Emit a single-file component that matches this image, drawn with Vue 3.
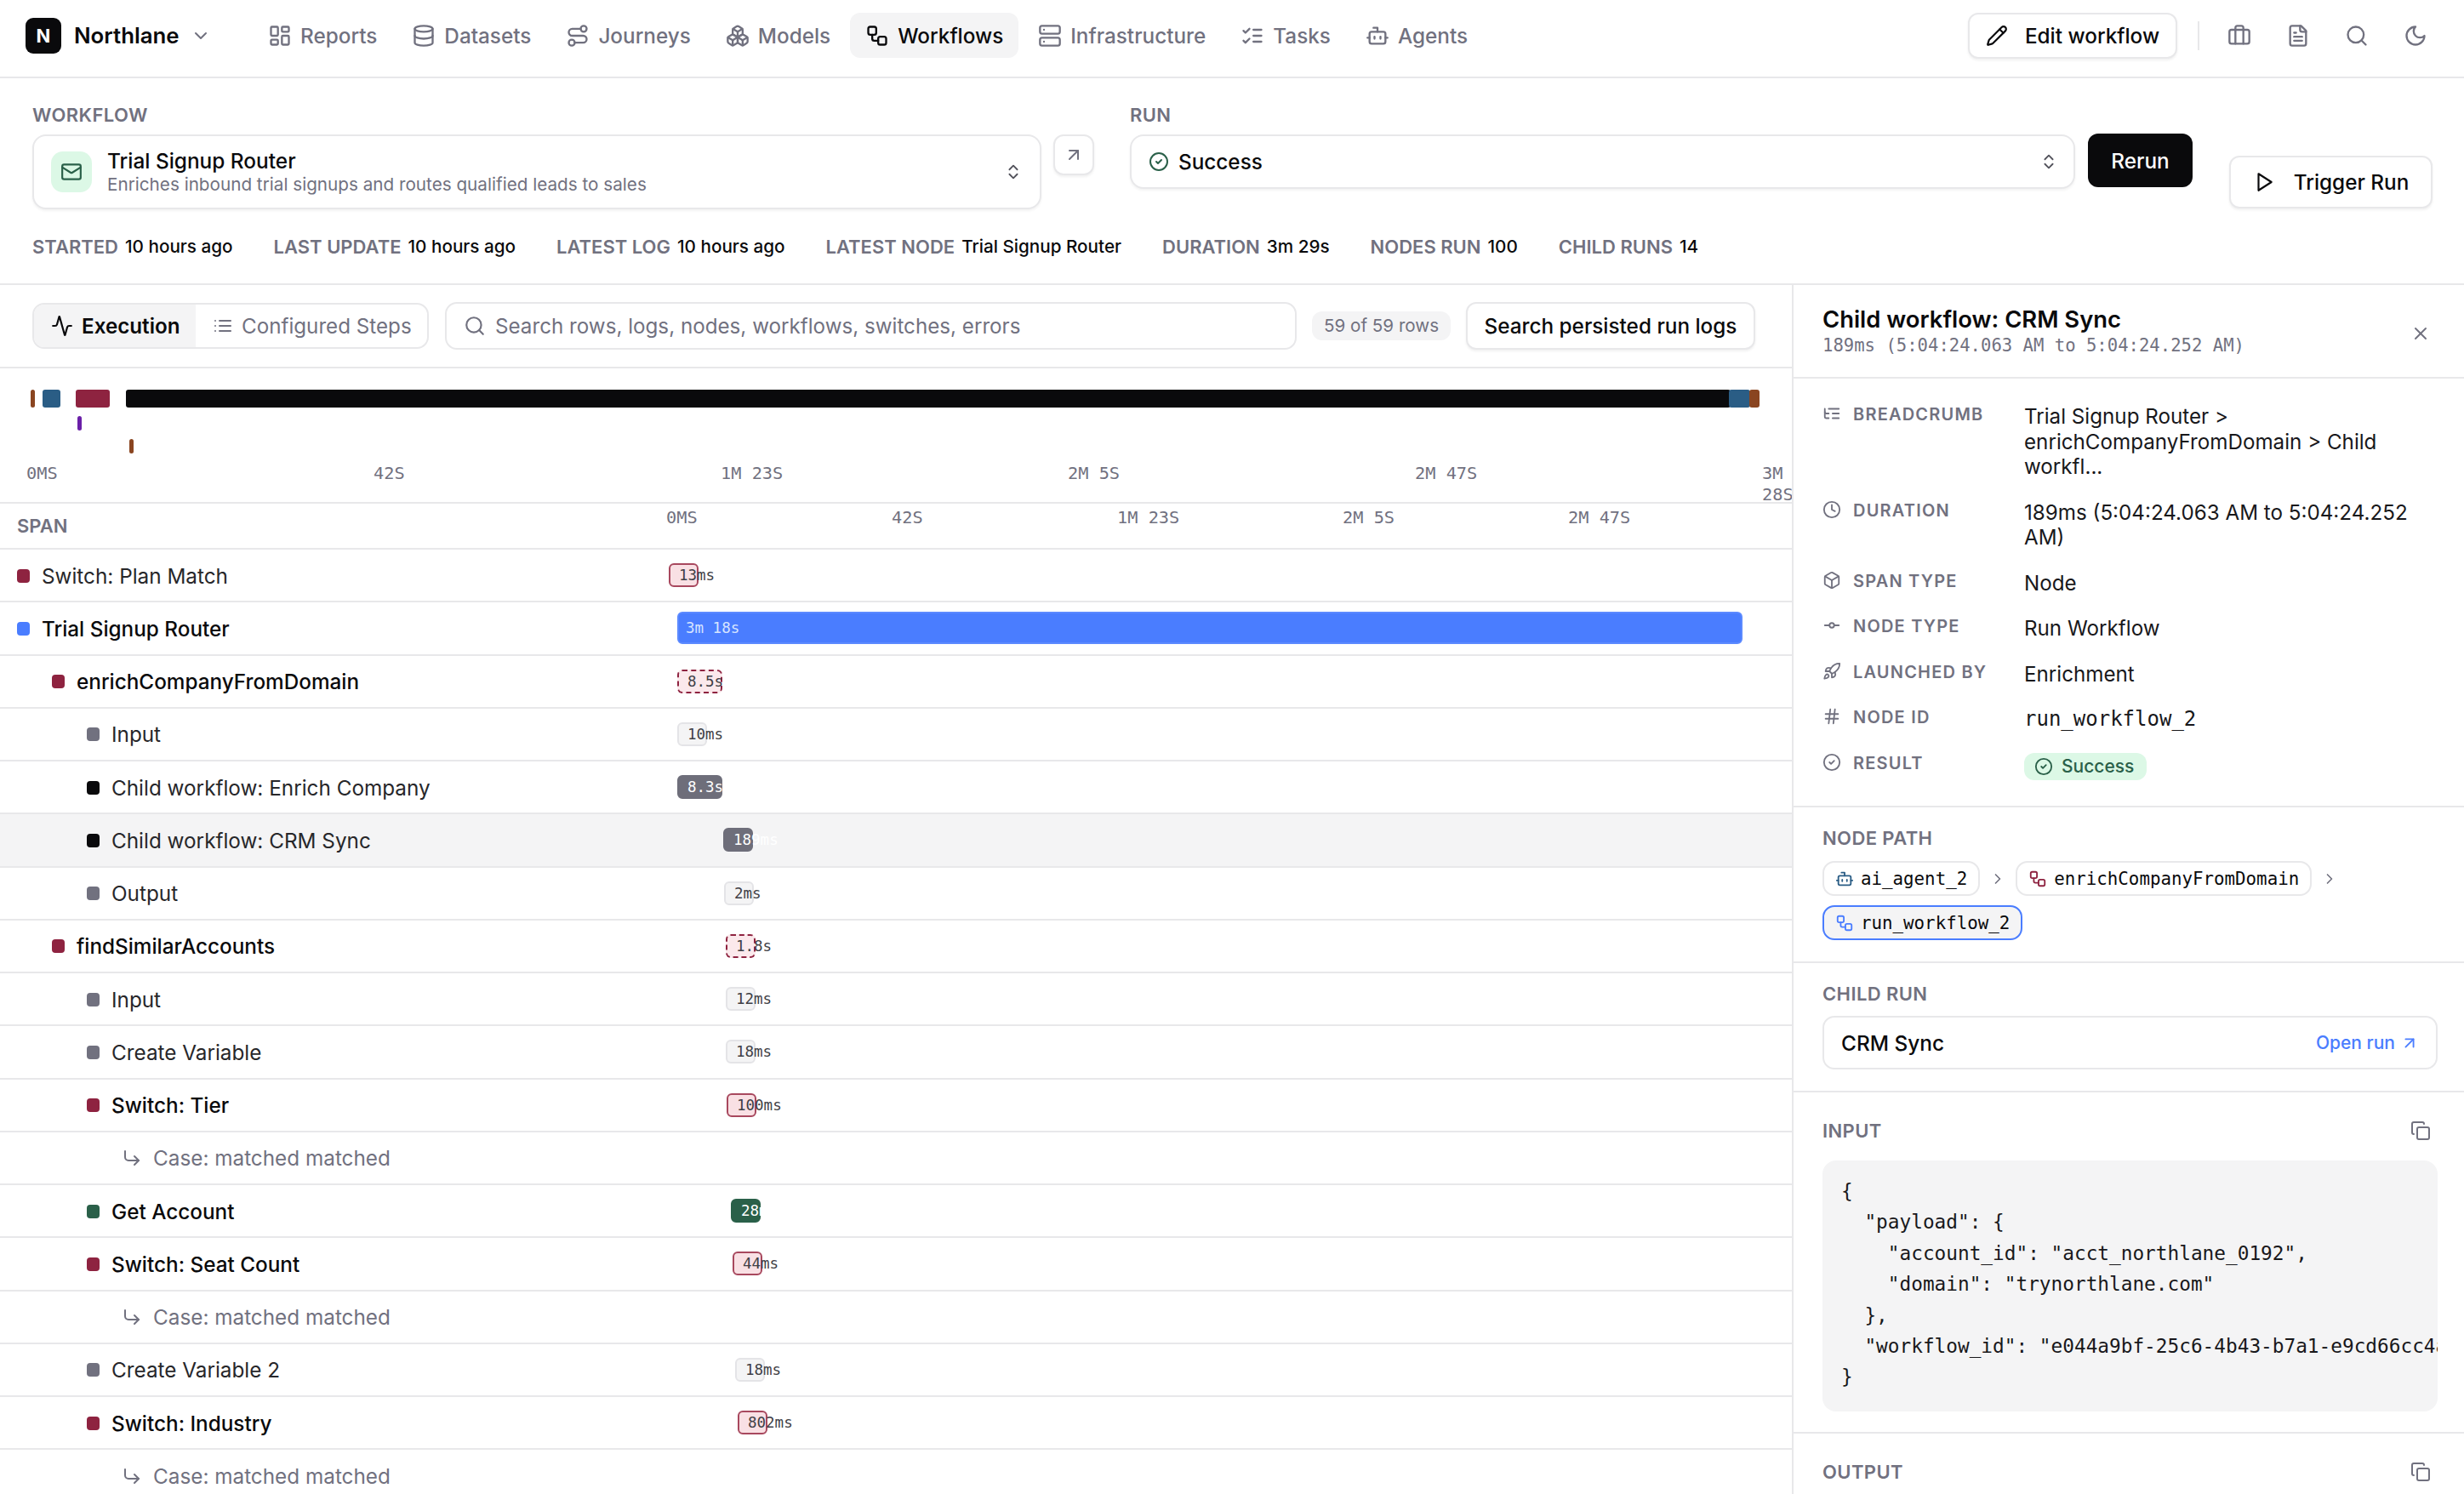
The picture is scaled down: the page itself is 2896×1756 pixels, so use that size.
<script setup>
import { h } from 'vue'

const paths = {
  reports: '<rect width="7" height="9" x="3" y="3" rx="1"/><rect width="7" height="5" x="14" y="3" rx="1"/><rect width="7" height="9" x="14" y="12" rx="1"/><rect width="7" height="5" x="3" y="16" rx="1"/>',
  database: '<ellipse cx="12" cy="5" rx="9" ry="3"/><path d="M3 5V19A9 3 0 0 0 21 19V5"/><path d="M3 12A9 3 0 0 0 21 12"/>',
  route: '<circle cx="6" cy="19" r="3"/><path d="M9 19h8.5a3.5 3.5 0 0 0 0-7h-11a3.5 3.5 0 0 1 0-7H15"/><circle cx="18" cy="5" r="3"/>',
  boxes: '<path d="M2.97 12.92A2 2 0 0 0 2 14.63v3.24a2 2 0 0 0 .97 1.71l3 1.8a2 2 0 0 0 2.06 0L12 19v-5.5l-5-3-4.03 2.42Z"/><path d="m7 16.5-4.74-2.85"/><path d="m7 16.5 5-3"/><path d="M7 16.5v5.17"/><path d="M12 13.5V19l3.97 2.38a2 2 0 0 0 2.06 0l3-1.8a2 2 0 0 0 .97-1.71v-3.24a2 2 0 0 0-.97-1.71L17 10.5l-5 3Z"/><path d="m17 16.5-5-3"/><path d="m17 16.5 4.74-2.85"/><path d="M17 16.5v5.17"/><path d="M7.97 4.42A2 2 0 0 0 7 6.13v4.37l5 3 5-3V6.13a2 2 0 0 0-.97-1.71l-3-1.8a2 2 0 0 0-2.06 0l-3 1.8Z"/><path d="M12 8 7.26 5.15"/><path d="m12 8 4.74-2.85"/><path d="M12 13.5V8"/>',
  workflow: '<rect width="8" height="8" x="3" y="3" rx="2"/><path d="M7 11v4a2 2 0 0 0 2 2h4"/><rect width="8" height="8" x="13" y="13" rx="2"/>',
  server: '<rect width="20" height="8" x="2" y="2" rx="2" ry="2"/><rect width="20" height="8" x="2" y="14" rx="2" ry="2"/><line x1="6" x2="6.01" y1="6" y2="6"/><line x1="6" x2="6.01" y1="18" y2="18"/>',
  tasks: '<path d="m3 17 2 2 4-4"/><path d="m3 7 2 2 4-4"/><path d="M13 6h8"/><path d="M13 12h8"/><path d="M13 18h8"/>',
  bot: '<path d="M12 8V4H8"/><rect width="16" height="12" x="4" y="8" rx="2"/><path d="M2 14h2"/><path d="M20 14h2"/><path d="M15 13v2"/><path d="M9 13v2"/>',
  pencil: '<path d="M21.174 6.812a1 1 0 0 0-3.986-3.987L3.842 16.174a2 2 0 0 0-.5.83l-1.321 4.352a.5.5 0 0 0 .623.622l4.353-1.32a2 2 0 0 0 .83-.497z"/><path d="m15 5 4 4"/>',
  briefcase: '<path d="M16 20V4a2 2 0 0 0-2-2h-4a2 2 0 0 0-2 2v16"/><rect width="20" height="14" x="2" y="6" rx="2"/>',
  file: '<path d="M15 2H6a2 2 0 0 0-2 2v16a2 2 0 0 0 2 2h12a2 2 0 0 0 2-2V7Z"/><path d="M14 2v4a2 2 0 0 0 2 2h4"/><path d="M10 9H8"/><path d="M16 13H8"/><path d="M16 17H8"/>',
  search: '<circle cx="11" cy="11" r="8"/><path d="m21 21-4.3-4.3"/>',
  moon: '<path d="M12 3a6 6 0 0 0 9 9 9 9 0 1 1-9-9Z"/>',
  mail: '<rect width="20" height="16" x="2" y="4" rx="2"/><path d="m22 7-8.97 5.7a1.94 1.94 0 0 1-2.06 0L2 7"/>',
  updown: '<path d="m7 15 5 5 5-5"/><path d="m7 9 5-5 5 5"/>',
  external: '<path d="M7 7h10v10"/><path d="M7 17 17 7"/>',
  check: '<circle cx="12" cy="12" r="10"/><path d="m9 12 2 2 4-4"/>',
  play: '<polygon points="6 3 20 12 6 21 6 3"/>',
  activity: '<path d="M22 12h-2.48a2 2 0 0 0-1.93 1.46l-2.35 8.36a.25.25 0 0 1-.48 0L9.24 2.18a.25.25 0 0 0-.48 0l-2.35 8.36A2 2 0 0 1 4.49 12H2"/>',
  list: '<path d="M3 12h.01"/><path d="M3 18h.01"/><path d="M3 6h.01"/><path d="M8 12h13"/><path d="M8 18h13"/><path d="M8 6h13"/>',
  corner: '<polyline points="15 10 20 15 15 20"/><path d="M4 4v7a4 4 0 0 0 4 4h12"/>',
  x: '<path d="M18 6 6 18"/><path d="m6 6 12 12"/>',
  tree: '<path d="M21 12h-8"/><path d="M21 6H8"/><path d="M21 18h-8"/><path d="M3 6v4c0 1.1.9 2 2 2h3"/><path d="M3 10v6c0 1.1.9 2 2 2h3"/>',
  clock: '<circle cx="12" cy="12" r="10"/><polyline points="12 6 12 12 16 14"/>',
  box: '<path d="M21 8a2 2 0 0 0-1-1.73l-7-4a2 2 0 0 0-2 0l-7 4A2 2 0 0 0 3 8v8a2 2 0 0 0 1 1.73l7 4a2 2 0 0 0 2 0l7-4A2 2 0 0 0 21 16Z"/><path d="m3.3 7 8.7 5 8.7-5"/><path d="M12 22V12"/>',
  commit: '<circle cx="12" cy="12" r="3"/><line x1="3" x2="9" y1="12" y2="12"/><line x1="15" x2="21" y1="12" y2="12"/>',
  rocket: '<path d="M4.5 16.5c-1.5 1.26-2 5-2 5s3.74-.5 5-2c.71-.84.7-2.13-.09-2.91a2.18 2.18 0 0 0-2.91-.09z"/><path d="m12 15-3-3a22 22 0 0 1 2-3.95A12.88 12.88 0 0 1 22 2c0 2.72-.78 7.5-6 11a22.35 22.35 0 0 1-4 2z"/><path d="M9 12H4s.55-3.03 2-4c1.62-1.08 5 0 5 0"/><path d="M12 15v5s3.03-.55 4-2c1.08-1.62 0-5 0-5"/>',
  hash: '<line x1="4" x2="20" y1="9" y2="9"/><line x1="4" x2="20" y1="15" y2="15"/><line x1="10" x2="8" y1="3" y2="21"/><line x1="16" x2="14" y1="3" y2="21"/>',
  right: '<path d="m9 18 6-6-6-6"/>',
  down: '<path d="m6 9 6 6 6-6"/>',
  copy: '<rect width="14" height="14" x="8" y="8" rx="2" ry="2"/><path d="M4 16c-1.1 0-2-.9-2-2V4c0-1.1.9-2 2-2h10c1.1 0 2 .9 2 2"/>'
}

// small local icon, lucide style strokes
const Icon = (props) => h('svg', {
  width: props.size || 24,
  height: props.size || 24,
  viewBox: '0 0 24 24',
  fill: 'none',
  stroke: 'currentColor',
  'stroke-width': 2,
  'stroke-linecap': 'round',
  'stroke-linejoin': 'round',
  class: 'icon',
  innerHTML: paths[props.name]
})
Icon.props = ['name', 'size']

const navItems = [
  { label: 'Reports', icon: 'reports' },
  { label: 'Datasets', icon: 'database' },
  { label: 'Journeys', icon: 'route' },
  { label: 'Models', icon: 'boxes' },
  { label: 'Workflows', icon: 'workflow', active: true },
  { label: 'Infrastructure', icon: 'server' },
  { label: 'Tasks', icon: 'tasks' },
  { label: 'Agents', icon: 'bot' }
]

const stats = [
  ['STARTED', '10 hours ago'],
  ['LAST UPDATE', '10 hours ago'],
  ['LATEST LOG', '10 hours ago'],
  ['LATEST NODE', 'Trial Signup Router'],
  ['DURATION', '3m 29s'],
  ['NODES RUN', '100'],
  ['CHILD RUNS', '14']
]

const lanes = [
  { height: 21, bars: [
    { left: 36, width: 5, color: '#8a4520' },
    { left: 50, width: 21, color: '#2a5d85' },
    { left: 89, width: 40, color: '#8e2340' },
    { left: 148, width: 1886, color: '#0a0a0c' },
    { left: 2032, width: 25, color: '#2a5d85' },
    { left: 2056, width: 12, color: '#8a4520' }
  ] },
  { height: 17, bars: [{ left: 91, width: 5, color: '#6a1fa8' }] },
  { height: 17, bars: [{ left: 152, width: 5, color: '#8a4520' }] }
]

const miniTicks = ['0MS', '42S', '1M 23S', '2M 5S', '2M 47S', '3M 28S']
const spanTicks = ['0MS', '42S', '1M 23S', '2M 5S', '2M 47S']

const red = '#8e2340'
const gray = '#71717f'
const black = '#0a0a0c'
const rows = [
  { name: 'Switch: Plan Match', level: 0, dot: red, at: 0, time: '13ms', kind: 'switch' },
  { name: 'Trial Signup Router', level: 0, dot: '#4a7dff', at: 10, width: 1252, time: '3m 18s', kind: 'root', strong: true },
  { name: 'enrichCompanyFromDomain', level: 1, dot: red, at: 10, width: 53, time: '8.5s', kind: 'group', strong: true },
  { name: 'Input', level: 2, dot: gray, at: 10, time: '10ms', kind: 'plain' },
  { name: 'Child workflow: Enrich Company', level: 2, dot: black, at: 10, width: 53, time: '8.3s', kind: 'child' },
  { name: 'Child workflow: CRM Sync', level: 2, dot: black, at: 64, time: '189ms', kind: 'child', selected: true },
  { name: 'Output', level: 2, dot: gray, at: 65, time: '2ms', kind: 'plain' },
  { name: 'findSimilarAccounts', level: 1, dot: red, at: 67, time: '1.8s', kind: 'group', strong: true },
  { name: 'Input', level: 2, dot: gray, at: 67, time: '12ms', kind: 'plain' },
  { name: 'Create Variable', level: 2, dot: gray, at: 67, time: '18ms', kind: 'plain' },
  { name: 'Switch: Tier', level: 2, dot: red, at: 68, time: '100ms', kind: 'switch', strong: true },
  { name: 'Case: matched matched', level: 3, isCase: true },
  { name: 'Get Account', level: 2, dot: '#2a6049', at: 73, time: '28ms', kind: 'data', strong: true },
  { name: 'Switch: Seat Count', level: 2, dot: red, at: 75, time: '44ms', kind: 'switch', strong: true },
  { name: 'Case: matched matched', level: 3, isCase: true },
  { name: 'Create Variable 2', level: 2, dot: gray, at: 78, time: '18ms', kind: 'plain' },
  { name: 'Switch: Industry', level: 2, dot: red, at: 81, time: '802ms', kind: 'switch', strong: true },
  { name: 'Case: matched matched', level: 3, isCase: true }
]

const details = [
  { label: 'BREADCRUMB', icon: 'tree', value: 'Trial Signup Router > enrichCompanyFromDomain > Child workfl...' },
  { label: 'DURATION', icon: 'clock', value: '189ms (5:04:24.063 AM to 5:04:24.252 AM)' },
  { label: 'SPAN TYPE', icon: 'box', value: 'Node' },
  { label: 'NODE TYPE', icon: 'commit', value: 'Run Workflow' },
  { label: 'LAUNCHED BY', icon: 'rocket', value: 'Enrichment' },
  { label: 'NODE ID', icon: 'hash', value: 'run_workflow_2', mono: true },
  { label: 'RESULT', icon: 'check', pill: 'Success' }
]

const inputJson = `{
  "payload": {
    "account_id": "acct_northlane_0192",
    "domain": "trynorthlane.com"
  },
  "workflow_id": "e044a9bf-25c6-4b43-b7a1-e9cd66cc4a21"
}`
</script>

<template>
  <div class="page">
    <header class="topbar">
      <div class="brand">
        <span class="logo">N</span>
        <span class="brand-name">Northlane</span>
        <Icon name="down" :size="24" class="brand-chevron" />
      </div>
      <nav class="nav">
        <a v-for="item in navItems" :key="item.label" class="nav-item" :class="{ active: item.active }">
          <Icon :name="item.icon" :size="28" />
          <span>{{ item.label }}</span>
        </a>
      </nav>
      <div class="topbar-right">
        <button class="btn edit-btn"><Icon name="pencil" :size="26" /> Edit workflow</button>
        <span class="divider"></span>
        <div class="tool-icons">
          <Icon name="briefcase" :size="28" />
          <Icon name="file" :size="28" />
          <Icon name="search" :size="28" />
          <Icon name="moon" :size="28" />
        </div>
      </div>
    </header>

    <section class="run-head">
      <div class="pickers">
        <div class="picker-col">
          <div class="field-label">WORKFLOW</div>
          <div class="workflow-line">
            <div class="select workflow-select">
              <span class="wf-icon"><Icon name="mail" :size="26" /></span>
              <div class="wf-text">
                <div class="wf-title">Trial Signup Router</div>
                <div class="wf-sub">Enriches inbound trial signups and routes qualified leads to sales</div>
              </div>
              <Icon name="updown" :size="22" class="updown" />
            </div>
            <button class="btn open-btn"><Icon name="external" :size="24" /></button>
          </div>
        </div>
        <div class="picker-col run-col">
          <div class="field-label">RUN</div>
          <div class="run-line">
            <div class="select run-select">
              <Icon name="check" :size="24" class="ok-icon" />
              <span class="run-value">Success</span>
              <Icon name="updown" :size="22" class="updown" />
            </div>
            <button class="rerun">Rerun</button>
          </div>
        </div>
        <button class="btn trigger-btn"><Icon name="play" :size="26" /> Trigger Run</button>
      </div>
      <div class="stats">
        <div v-for="stat in stats" :key="stat[0]" class="stat">
          <span class="stat-label">{{ stat[0] }}</span>
          <span class="stat-value">{{ stat[1] }}</span>
        </div>
      </div>
    </section>

    <main class="body">
      <section class="trace">
        <div class="toolbar">
          <div class="segment">
            <span class="seg active"><Icon name="activity" :size="26" /> Execution</span>
            <span class="seg"><Icon name="list" :size="24" /> Configured Steps</span>
          </div>
          <div class="search">
            <Icon name="search" :size="26" />
            <span>Search rows, logs, nodes, workflows, switches, errors</span>
          </div>
          <span class="count">59 of 59 rows</span>
          <button class="btn logs-btn">Search persisted run logs</button>
        </div>

        <div class="minimap">
          <div v-for="(lane, i) in lanes" :key="i" class="lane" :style="{ height: lane.height + 'px' }">
            <span
              v-for="bar in lane.bars"
              :key="bar.left"
              class="lane-bar"
              :style="{ left: bar.left + 'px', width: bar.width + 'px', background: bar.color }"
            ></span>
          </div>
          <div class="mini-ticks">
            <span v-for="tick in miniTicks" :key="tick" class="mini-tick">{{ tick }}</span>
          </div>
        </div>

        <div class="span-head">
          <div class="span-title">SPAN</div>
          <div class="span-ticks">
            <span v-for="tick in spanTicks" :key="tick" class="span-tick">{{ tick }}</span>
          </div>
        </div>

        <div
          v-for="(row, i) in rows"
          :key="i"
          class="row"
          :class="{ selected: row.selected }"
        >
          <div class="row-name" :class="{ strong: row.strong, 'case-name': row.isCase }" :style="{ paddingLeft: 20 + row.level * 41 + 'px' }">
            <Icon v-if="row.isCase" name="corner" :size="24" class="case-icon" />
            <span v-else class="dot" :style="{ background: row.dot }"></span>
            <span>{{ row.name }}</span>
          </div>
          <div v-if="!row.isCase" class="track">
            <div
              class="bar"
              :class="row.kind"
              :style="{ marginLeft: row.at + 'px', width: (row.width || 35) + 'px' }"
            >{{ row.time }}</div>
          </div>
        </div>
      </section>

      <aside class="panel">
        <div class="panel-head">
          <div>
            <h2 class="panel-title">Child workflow: CRM Sync</h2>
            <div class="panel-sub">189ms (5:04:24.063 AM to 5:04:24.252 AM)</div>
          </div>
          <Icon name="x" :size="24" class="close" />
        </div>

        <div class="panel-section meta">
          <div v-for="item in details" :key="item.label" class="meta-row">
            <div class="meta-label"><Icon :name="item.icon" :size="22" /><span>{{ item.label }}</span></div>
            <div v-if="item.pill" class="meta-value">
              <span class="pill"><Icon name="check" :size="22" /> {{ item.pill }}</span>
            </div>
            <div v-else class="meta-value" :class="{ mono: item.mono }">{{ item.value }}</div>
          </div>
        </div>

        <div class="panel-section path-section">
          <div class="section-label">NODE PATH</div>
          <div class="chips">
            <span class="chip"><Icon name="bot" :size="22" class="navy" /> ai_agent_2</span>
            <Icon name="right" :size="20" class="chip-arrow" />
            <span class="chip"><Icon name="workflow" :size="22" class="crimson" /> enrichCompanyFromDomain</span>
            <Icon name="right" :size="20" class="chip-arrow" />
            <span class="chip current"><Icon name="workflow" :size="22" class="blue" /> run_workflow_2</span>
          </div>
        </div>

        <div class="panel-section child-section">
          <div class="section-label">CHILD RUN</div>
          <div class="child-box">
            <span class="child-name">CRM Sync</span>
            <a class="open-run">Open run <Icon name="external" :size="22" /></a>
          </div>
        </div>

        <div class="panel-section code-section">
          <div class="code-head">
            <span class="section-label">INPUT</span>
            <Icon name="copy" :size="24" class="copy" />
          </div>
          <pre class="code">{{ inputJson }}</pre>
        </div>

        <div class="panel-section code-section">
          <div class="code-head">
            <span class="section-label">OUTPUT</span>
            <Icon name="copy" :size="24" class="copy" />
          </div>
        </div>
      </aside>
    </main>
  </div>
</template>

<style>
html, body {
  margin: 0;
  background: #fff;
}
</style>

<style scoped>
.page {
  width: 2896px;
  height: 1756px;
  overflow: hidden;
  display: flex;
  flex-direction: column;
  font-family: Inter, "Noto Sans", sans-serif;
  color: #0a0a0c;
  background: #fff;
}

.icon {
  flex-shrink: 0;
  display: block;
}

.btn {
  display: inline-flex;
  align-items: center;
  justify-content: center;
  background: #fff;
  border: 2px solid #e8e8ea;
  border-radius: 12px;
  box-shadow: 0 2px 3px rgba(0, 0, 0, 0.06);
  font: 500 24.3px Inter, sans-serif;
  color: #0a0a0c;
  padding: 0;
}

/* top bar */
.topbar {
  height: 92px;
  flex: none;
  box-sizing: border-box;
  border-bottom: 2px solid #e8e8ea;
  display: flex;
  align-items: center;
  padding: 0 43px 7px 30px;
}

.brand {
  display: flex;
  align-items: center;
  width: 267px;
  flex: none;
}

.logo {
  width: 42px;
  height: 42px;
  border-radius: 9px;
  background: #0a0a0c;
  color: #fff;
  font-weight: 700;
  font-size: 22px;
  display: flex;
  align-items: center;
  justify-content: center;
}

.brand-name {
  margin-left: 15px;
  font-size: 25.8px;
  font-weight: 600;
}

.brand-chevron {
  margin-left: 13px;
  color: #71717f;
}

.nav {
  display: flex;
  gap: 5px;
}

.nav-item {
  height: 53px;
  box-sizing: border-box;
  display: flex;
  align-items: center;
  gap: 10px;
  padding: 0 18px;
  border-radius: 12px;
  font-size: 24.3px;
  font-weight: 500;
  color: #71717f;
}

.nav-item.active {
  background: #f4f4f5;
  color: #0a0a0c;
}

.topbar-right {
  margin-left: auto;
  display: flex;
  align-items: center;
}

.edit-btn {
  width: 246px;
  height: 54px;
  gap: 20px;
}

.divider {
  width: 2px;
  height: 34px;
  background: #e8e8ea;
  margin: 0 33px 0 24px;
}

.tool-icons {
  display: flex;
  gap: 41px;
  color: #71717f;
}

/* run header */
.run-head {
  flex: none;
  box-sizing: border-box;
  height: 243px;
  border-bottom: 2px solid #e8e8ea;
  padding: 31px 34px 0 38px;
}

.pickers {
  display: flex;
  align-items: flex-start;
}

.picker-col {
  flex: none;
}

.field-label {
  font-size: 22px;
  line-height: 24px;
  font-weight: 600;
  letter-spacing: 0.4px;
  color: #71717f;
  margin-bottom: 11px;
}

.workflow-line {
  display: flex;
  align-items: flex-start;
  gap: 14px;
  margin-right: 42px;
}

.select {
  display: flex;
  align-items: center;
  box-sizing: border-box;
  border: 2px solid #e8e8ea;
  border-radius: 16px;
  box-shadow: 0 2px 3px rgba(0, 0, 0, 0.05);
  background: #fff;
}

.workflow-select {
  width: 1186px;
  height: 88px;
  padding: 0 20px 0 20px;
}

.wf-icon {
  width: 48px;
  height: 48px;
  border-radius: 14px;
  background: #dcf8e6;
  color: #2a6049;
  display: flex;
  align-items: center;
  justify-content: center;
  flex: none;
}

.wf-text {
  margin-left: 18px;
  flex: 1;
}

.wf-title {
  font-size: 24.4px;
  line-height: 30px;
  font-weight: 500;
}

.wf-sub {
  font-size: 20.7px;
  line-height: 26px;
  color: #71717f;
}

.updown {
  color: #52525b;
}

.open-btn {
  width: 48px;
  height: 48px;
  color: #71717f;
}

.run-line {
  display: flex;
  align-items: flex-start;
  gap: 15px;
}

.run-select {
  width: 1111px;
  height: 64px;
  padding: 0 18px 0 20px;
}

.ok-icon {
  color: #2a6049;
}

.run-value {
  margin-left: 11px;
  flex: 1;
  font-size: 24.3px;
  font-weight: 500;
}

.rerun {
  width: 123px;
  height: 63px;
  border: 0;
  border-radius: 12px;
  background: #0a0a0c;
  color: #fff;
  font: 500 24.3px Inter, sans-serif;
  margin-top: -1px;
}

.trigger-btn {
  width: 239px;
  height: 62px;
  margin-left: 43px;
  margin-top: 60px;
  gap: 22px;
}

.stats {
  display: flex;
  gap: 48px;
  margin-top: 32px;
  line-height: 24px;
}

.stat {
  display: flex;
  gap: 8px;
  white-space: nowrap;
}

.stat-label {
  font-size: 22px;
  font-weight: 600;
  color: #71717f;
}

.stat-value {
  font-size: 20.7px;
  font-weight: 500;
}

/* main split */
.body {
  flex: 1;
  min-height: 0;
  display: flex;
}

.trace {
  width: 2106px;
  flex: none;
  overflow: hidden;
}

.toolbar {
  height: 98px;
  box-sizing: border-box;
  border-bottom: 2px solid #e8e8ea;
  display: flex;
  align-items: center;
  padding: 0 43px 0 38px;
}

.segment {
  display: flex;
  width: 466px;
  height: 54px;
  box-sizing: border-box;
  border: 2px solid #e8e8ea;
  border-radius: 14px;
  overflow: hidden;
  flex: none;
}

.seg {
  display: flex;
  align-items: center;
  gap: 10px;
  font-size: 24.2px;
  color: #71717f;
  padding-left: 20px;
  flex: 1;
}

.seg.active {
  flex: none;
  width: 190px;
  box-sizing: border-box;
  background: #f4f4f5;
  color: #0a0a0c;
  font-weight: 600;
  padding-left: 20px;
}

.search {
  margin-left: 19px;
  width: 1001px;
  height: 56px;
  box-sizing: border-box;
  border: 2px solid #e8e8ea;
  border-radius: 14px;
  display: flex;
  align-items: center;
  gap: 11px;
  padding-left: 20px;
  font-size: 24.2px;
  color: #71717f;
  flex: none;
}

.count {
  margin-left: 18px;
  background: #f4f4f5;
  border-radius: 12px;
  font-size: 20.6px;
  line-height: 34px;
  color: #71717f;
  padding: 0 14px;
  width: 163px;
  box-sizing: border-box;
  white-space: nowrap;
  flex: none;
}

.logs-btn {
  margin-left: 18px;
  width: 340px;
  height: 56px;
  flex: none;
}

.minimap {
  height: 157px;
  box-sizing: border-box;
  padding-top: 25px;
  display: flex;
  flex-direction: column;
  gap: 10px;
}

.lane {
  position: relative;
  flex: none;
}

.lane-bar {
  position: absolute;
  top: 0;
  bottom: 0;
  border-radius: 3px;
}

.mini-ticks {
  display: flex;
  padding-left: 31px;
  font: 20.3px/25px "DejaVu Sans Mono", monospace;
  color: #71717f;
  margin-top: 1px;
}

.mini-tick {
  flex: none;
  width: 408px;
}

.mini-tick:last-child {
  width: 35px;
}

.span-head {
  height: 56px;
  box-sizing: border-box;
  border-top: 2px solid #e8e8ea;
  border-bottom: 2px solid #e8e8ea;
  display: flex;
  position: relative;
  z-index: 1;
}

.span-title {
  width: 783px;
  flex: none;
  box-sizing: border-box;
  padding: 14px 0 0 20px;
  font-size: 22px;
  line-height: 24px;
  font-weight: 600;
  color: #71717f;
}

.span-ticks {
  display: flex;
  padding-top: 4px;
  font: 20.3px/25px "DejaVu Sans Mono", monospace;
  color: #71717f;
}

.span-tick {
  width: 265px;
  flex: none;
}

.row {
  height: 62.25px;
  box-sizing: border-box;
  border-bottom: 2px solid #e8e8ea;
  display: flex;
  align-items: center;
}

.row.selected {
  background: #f4f4f5;
}

.row-name {
  width: 786px;
  flex: none;
  box-sizing: border-box;
  display: flex;
  align-items: center;
  gap: 14px;
  padding-top: 1px;
  font-size: 24.3px;
  color: #27272a;
}

.row-name.strong {
  font-weight: 500;
  color: #0a0a0c;
}

.row-name.case-name {
  color: #71717f;
  gap: 13px;
}

.case-icon {
  color: #71717f;
}

.dot {
  width: 15px;
  height: 16px;
  border-radius: 4px;
  flex: none;
}

.track {
  flex: 1;
}

.bar {
  height: 28px;
  box-sizing: border-box;
  border-radius: 6px;
  border: 2px solid #e4e4e7;
  background: #f4f4f5;
  color: #3f3f46;
  font: 17.5px/24px "DejaVu Sans Mono", monospace;
  padding-left: 10px;
  white-space: nowrap;
}

.bar.switch {
  background: #f9e0e4;
  border-color: #a8485e;
}

.bar.group {
  background: #fbe9ec;
  border: 2px dashed #8e2340;
}

.bar.root {
  height: 38px;
  line-height: 34px;
  padding-left: 8px;
  background: #4a7dff;
  border-color: #5c8aff;
  color: #d6e4ff;
}

.bar.child {
  background: #6e6e7a;
  border-color: #6e6e7a;
  color: #fff;
}

.bar.data {
  background: #2a6049;
  border-color: #2a6049;
  color: #fff;
}

/* details panel */
.panel {
  flex: 1;
  min-width: 0;
  border-left: 2px solid #e8e8ea;
  overflow: hidden;
}

.panel-head {
  height: 110px;
  box-sizing: border-box;
  border-bottom: 2px solid #e8e8ea;
  display: flex;
  align-items: center;
  justify-content: space-between;
  padding: 0 39px 0 34px;
}

.panel-title {
  margin: 0;
  font-size: 27.4px;
  line-height: 34px;
  font-weight: 600;
}

.panel-sub {
  font: 20.6px/28px "DejaVu Sans Mono", monospace;
  color: #71717f;
}

.close {
  color: #71717f;
  margin-top: 6px;
}

.panel-section {
  box-sizing: border-box;
  border-bottom: 2px solid #e8e8ea;
  padding-left: 34px;
  padding-right: 31px;
}

.meta {
  padding-top: 30px;
  padding-bottom: 29px;
  display: flex;
  flex-direction: column;
  gap: 24px;
}

.meta-row {
  display: flex;
}

.meta-label {
  width: 237px;
  flex: none;
  display: flex;
  align-items: flex-start;
  gap: 14px;
  font-size: 20px;
  line-height: 24px;
  font-weight: 600;
  letter-spacing: 1.2px;
  color: #71717f;
}

.meta-value {
  flex: 1;
  font-size: 24.2px;
  line-height: 29.5px;
  color: #18181b;
}

.meta-value.mono {
  font: 24px/29.5px "DejaVu Sans Mono", monospace;
}

.pill {
  display: inline-flex;
  align-items: center;
  gap: 10px;
  height: 32px;
  width: 144px;
  box-sizing: border-box;
  padding-left: 12px;
  border-radius: 12px;
  background: #dcf8e6;
  color: #2a6049;
  font-size: 21px;
  font-weight: 500;
}

.section-label {
  font-size: 22px;
  line-height: 24px;
  font-weight: 600;
  letter-spacing: 0.4px;
  color: #71717f;
}

.path-section {
  padding-top: 24px;
  padding-bottom: 25px;
}

.chips {
  margin-top: 15px;
  display: flex;
  flex-wrap: wrap;
  align-items: center;
  gap: 11px;
}

.chip {
  height: 41px;
  box-sizing: border-box;
  border: 2px solid #e8e8ea;
  border-radius: 14px;
  display: inline-flex;
  align-items: center;
  gap: 8px;
  padding: 0 13px;
  font: 20.8px "DejaVu Sans Mono", monospace;
}

.chip.current {
  border-color: #4a7dff;
  background: #f4f4f5;
}

.chip-arrow {
  color: #71717f;
}

.navy {
  color: #2a5d85;
}

.crimson {
  color: #8e2340;
}

.blue {
  color: #4a7dff;
}

.child-section {
  padding-top: 24px;
  padding-bottom: 25px;
}

.child-box {
  margin-top: 14px;
  height: 63px;
  box-sizing: border-box;
  border: 2px solid #e8e8ea;
  border-radius: 14px;
  display: flex;
  align-items: center;
  justify-content: space-between;
  padding: 0 20px 0 20px;
}

.child-name {
  font-size: 24.4px;
  font-weight: 500;
}

.open-run {
  display: flex;
  align-items: center;
  gap: 6px;
  font-size: 21px;
  font-weight: 500;
  color: #4a7dff;
}

.code-section {
  padding-top: 33px;
  padding-bottom: 24px;
}

.code-head {
  display: flex;
  align-items: center;
  justify-content: space-between;
  padding-right: 8px;
  height: 24px;
}

.copy {
  color: #71717f;
}

.code {
  margin: 23px 0 0;
  height: 295px;
  box-sizing: border-box;
  padding: 18px 22px;
  border-radius: 16px;
  background: #f4f4f5;
  overflow: hidden;
  font: 22.75px/36.4px "DejaVu Sans Mono", monospace;
  color: #18181b;
}
</style>
